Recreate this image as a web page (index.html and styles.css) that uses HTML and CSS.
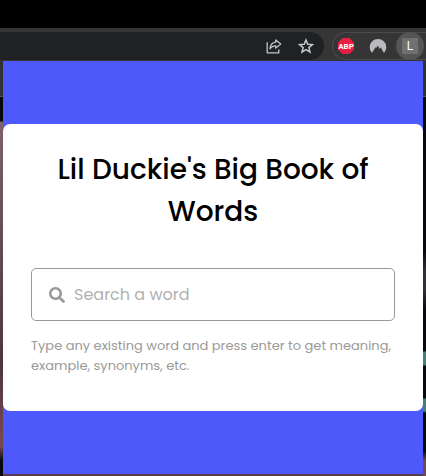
FILE: index.html
```html
<!DOCTYPE html>
<html lang="en">
<head>
<meta charset="utf-8">
<meta name="viewport" content="width=device-width, initial-scale=1">
<title>Lil Duckie's Big Book of Words</title>
<link rel="stylesheet" href="styles.css">
</head>
<body>
<header class="toolbar">
  <div class="omnibox">
    <button class="tool" type="button" aria-label="Share">
      <svg width="16" height="16" viewBox="0 0 16 16" fill="none" stroke="#c3c4c7" stroke-width="1.3" stroke-linejoin="round"><path d="M1.200 4.200v10.600h11.600v-3.200M9.700 2l5.100 4-5.100 4V7.800C6.900 7.800 5.200 8.700 4 10.900 4.300 7.300 6 4.500 9.700 4.200z"/></svg>
    </button>
    <button class="tool" type="button" aria-label="Bookmark">
      <svg width="16" height="16" viewBox="0 0 16 16" fill="none" stroke="#c8c9cb" stroke-width="1.5"><path d="M8 2l1.800 4.200 4.600.4-3.500 3 1.100 4.500L8 11.700l-4 2.400 1.100-4.500-3.500-3 4.600-.4z"/></svg>
    </button>
  </div>
  <div class="extensions">
    <button class="tool" type="button" aria-label="ABP">
      <svg width="18" height="18" viewBox="0 0 18 18"><path d="M5.600 1h6.800L17 5.600v6.800L12.400 17H5.600L1 12.400V5.600z" fill="#e81f43"/><text class="abp" x="9" y="12" text-anchor="middle">ABP</text></svg>
    </button>
    <button class="tool" type="button" aria-label="VPN">
      <svg width="18" height="18" viewBox="0 0 18 18"><path d="M3 16A8.300 8.300 0 1 1 15 16l-3.400-5.700-1 1.700L8.700 8.500 7.300 11l-.8-.8z" fill="#b9bbc1"/></svg>
    </button>
    <button class="tool active" type="button" aria-label="Dictionary"><span class="letter">L</span></button>
  </div>
</header>
<div class="stage">
  <main class="popup">
    <section class="card">
      <h1 class="title">Lil Duckie's Big Book of Words</h1>
      <form class="search">
        <svg class="search-icon" width="16" height="16" viewBox="0 0 512 512" fill="#999"><path d="M505 442.700 405.300 343c-4.500-4.500-10.600-7-17-7H372c27.600-35.300 44-79.700 44-128C416 93.100 322.900 0 208 0S0 93.100 0 208s93.100 208 208 208c48.300 0 92.700-16.400 128-44v16.300c0 6.400 2.500 12.500 7 17l99.700 99.700c9.400 9.400 24.600 9.400 33.900 0l28.300-28.300c9.400-9.400 9.400-24.600.1-34zM208 336c-70.700 0-128-57.200-128-128 0-70.700 57.200-128 128-128 70.700 0 128 57.200 128 128 0 70.700-57.200 128-128 128z"/></svg>
        <input class="field" type="text" aria-label="Search a word" placeholder="Search a word">
      </form>
      <p class="hint">Type any existing word and press enter to get meaning, example, synonyms, etc.</p>
    </section>
  </main>
</div>
</body>
</html>
```
FILE: styles.css
```css
* { box-sizing: border-box; margin: 0; padding: 0; }

body {
  display: grid;
  grid-template-columns: minmax(0, 1fr);
  grid-template-rows: auto 1fr;
  min-height: 100vh;
  padding-top: 28px;
  background: #000;
  font-family: Poppins, Inter, sans-serif;
}

button { border: 0; background: none; font: inherit; }

.toolbar {
  display: flex;
  gap: 8px;
  padding: 4px 0 1px;
  background: #353535;
}

.omnibox {
  display: flex;
  flex: 1;
  align-items: center;
  justify-content: flex-end;
  gap: 16px;
  height: 28px;
  padding-right: 10px;
  border-radius: 0 14px 14px 0;
  background: #202124;
}

.tool {
  display: flex;
  align-items: center;
  justify-content: center;
}

.extensions {
  display: flex;
  align-items: center;
  gap: 14px;
  height: 28px;
  padding-left: 4px;
  border: 1px solid #4b4b4b;
  border-right: 0;
  border-radius: 14px 0 0 14px;
}

.abp { fill: #fff; font: bold 8px "Liberation Sans Narrow", Roboto, sans-serif; }

.active {
  width: 28px;
  height: 28px;
  margin: 0 2px 0 -5px;
  border-radius: 50%;
  background: #555;
}

.letter {
  width: 16px;
  height: 16px;
  background: #707070;
  color: #fff;
  font: 12px/16px Roboto, sans-serif;
}

.stage {
  display: grid;
  grid-template-columns: minmax(0, 1fr);
  padding: 0 3px 2px;
  background:
    linear-gradient(#303134 35px, #555 35px, #555 36px, #08080f 36px, #08080f 60px, #80616a 61px, #50343f 300px, #754953 385px, #080810 400px) left / 3px 100% no-repeat,
    linear-gradient(#303134 35px, #555 35px, #555 36px, #08080f 36px, #08080f 190px, #32303b 210px, #32303b 228px, #08080f 250px, #08080f 290px, #438078 291px, #438078 304px, #08080f 305px, #08080f 337px, #438078 338px, #438078 350px, #08080f 352px, #080810 390px, #754953 400px) right / 3px 100% no-repeat,
    #5a3d52;
}

.popup {
  padding-top: 63px;
  background: #4d59fb;
}

.card {
  padding: 25px 28px 35px;
  border-radius: 7px;
  background: #fff;
}

.title {
  margin-bottom: 35px;
  color: #000;
  font-size: 28px;
  font-weight: 500;
  line-height: 42px;
  text-align: center;
}

.search {
  display: flex;
  align-items: center;
  gap: 9px;
  height: 53px;
  padding: 0 18px 0 17px;
  border: 1px solid #999;
  border-radius: 5px;
}

.search:focus-within { border-color: #4d59fb; }

.field {
  flex: 1;
  min-width: 0;
  height: 100%;
  border: 0;
  outline: 0;
  background: none;
  color: #000;
  font: inherit;
  font-size: 16px;
}

.field::placeholder { color: #b1b1b1; }

.hint {
  margin-top: 15px;
  color: #999;
  font-size: 13px;
  line-height: 20px;
}
```
